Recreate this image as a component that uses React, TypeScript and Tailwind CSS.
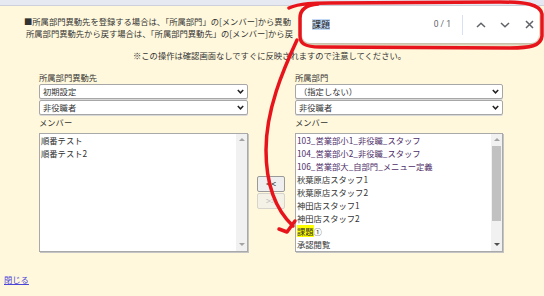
import React from "react";

function Chevron() {
  return (
    <svg width="7" height="5" viewBox="0 0 7 5" className="shrink-0">
      <path d="M0.8 1 L3.5 3.8 L6.2 1" fill="none" stroke="#222" strokeWidth="1.5" />
    </svg>
  );
}

function Select({ label }: { label: string }) {
  return (
    <div className="h-[15px] flex items-center justify-between bg-white border border-[#a7a7a7] rounded-[2px] pl-[3px] pr-[3px] shadow-[0_1px_0_#d8d8d8]">
      <span className="leading-[13px]">{label}</span>
      <Chevron />
    </div>
  );
}

function ScrollBar({ thumb }: { thumb: boolean }) {
  return (
    <div className="w-[11px] bg-[#f1f1f1] flex flex-col items-center">
      <div className="h-[12px] flex items-center justify-center">
        <div className="w-0 h-0 border-l-[3px] border-r-[3px] border-b-[3px] border-l-transparent border-r-transparent border-b-[#a3a3a3]" />
      </div>
      <div className="flex-1 w-full px-[1px]">
        {thumb ? <div className="h-[75px] bg-[#c1c1c1]" /> : null}
      </div>
      <div className="h-[12px] flex items-center justify-center">
        <div className={"w-0 h-0 border-l-[3px] border-r-[3px] border-t-[3px] border-l-transparent border-r-transparent " + (thumb ? "border-t-[#505050]" : "border-t-[#a3a3a3]")} />
      </div>
    </div>
  );
}

function ListBox({ children, thumb }: { children: React.ReactNode; thumb: boolean }) {
  return (
    <div className="h-[119px] flex bg-white border border-[#a9a9a9] shadow-[1px_1px_0_#c4c4c4]">
      <div className="flex-1 pl-[1px] leading-[13.05px] overflow-hidden">{children}</div>
      <ScrollBar thumb={thumb} />
    </div>
  );
}

export default function App() {
  const purple = "text-[#4e2d68]";
  return (
    <div className="relative w-[544px] h-[296px] overflow-hidden bg-[#fff8dc] font-['Noto_Sans_CJK_JP',sans-serif] text-[8.3px] text-[#333]">
      <div className="h-[6px] bg-[#e7e9f2] border-b border-[#cfd1da]" />
      <div className="pl-[24px] pt-[10px] leading-[11.6px] whitespace-nowrap">
        <div className="w-[276px] overflow-hidden">
          <p>■所属部門異動先を登録する場合は、「所属部門」の[メンバー]から異動</p>
          <p className="pl-[2px]">所属部門異動先から戻す場合は、「所属部門異動先」の[メンバー]から戻</p>
        </div>
        <p className="mt-[11px] pl-[109px]">※この操作は確認画面なしですぐに反映されますので注意してください。</p>
      </div>

      <div className="mt-[9px] ml-[39px] grid grid-cols-[209px_47px_208px] whitespace-nowrap">
        <div>
          <div className="leading-[12px]">所属部門異動先</div>
          <div className="mt-[1px]"><Select label="初期設定" /></div>
          <div className="mt-[1px]"><Select label="非役職者" /></div>
        </div>
        <div />
        <div>
          <div className="leading-[12px]">所属部門</div>
          <div className="mt-[1px]"><Select label="（指定しない）" /></div>
          <div className="mt-[1px]"><Select label="非役職者" /></div>
        </div>

        <div className="mt-[1px] leading-[12px]">メンバー</div>
        <div />
        <div className="mt-[1px] leading-[12px]">メンバー</div>

        <div className="mt-[5px]">
          <ListBox thumb={false}>
            <div>順番テスト</div>
            <div>順番テスト2</div>
          </ListBox>
        </div>
        <div className="mt-[5px] flex flex-col items-center justify-center gap-[1px] pr-[1px]">
          <div className="w-[28px] h-[16px] flex items-center justify-center bg-[#efefef] border border-[#9a9a9a] rounded-[2px] text-[9px] text-[#222] leading-none">&lt;&lt;</div>
          <div className="w-[28px] h-[16px] flex items-center justify-center bg-[#f4f1e6] border border-[#d6d4cc] rounded-[2px] text-[9px] text-[#bcbcbc] leading-none">&gt;&gt;</div>
        </div>
        <div className="mt-[5px]">
          <ListBox thumb={true}>
            <div className={purple}>103_営業部小1_非役職_スタッフ</div>
            <div className={purple}>104_営業部小2_非役職_スタッフ</div>
            <div className={purple}>106_営業部大_自部門_メニュー定義</div>
            <div>秋葉原店スタッフ1</div>
            <div>秋葉原店スタッフ2</div>
            <div>神田店スタッフ1</div>
            <div>神田店スタッフ2</div>
            <div><span className="bg-[#ffff00]">課題</span>①</div>
            <div>承認閲覧</div>
          </ListBox>
        </div>
      </div>

      <div className="mt-[21px] ml-[4px] leading-[12px]">
        <a className="text-[#4b45d8] underline">閉じる</a>
      </div>

      {/* Browser find bar */}
      <div className="absolute left-[302px] top-[6px] w-[237px] h-[37px] bg-white rounded-b-[8px] shadow-[0_2px_3px_rgba(0,0,0,0.25)] flex items-center">
        <span className="ml-[10px] bg-[#c3d8f5] text-[#202124] text-[9px] leading-[11px]">課題</span>
        <span className="ml-auto text-[#5f6368] text-[8.5px] font-['Roboto',sans-serif]">0 / 1</span>
        <div className="ml-[11px] w-px h-[20px] bg-[#d7e1f3]" />
        <svg width="10" height="6" viewBox="0 0 10 6" className="ml-[13px]">
          <path d="M1 5 L5 1.2 L9 5" fill="none" stroke="#5f6368" strokeWidth="1.5" />
        </svg>
        <svg width="10" height="6" viewBox="0 0 10 6" className="ml-[14px]">
          <path d="M1 1 L5 4.8 L9 1" fill="none" stroke="#5f6368" strokeWidth="1.5" />
        </svg>
        <svg width="9" height="9" viewBox="0 0 9 9" className="ml-[15px] mr-[5px]">
          <path d="M1 1 L8 8 M8 1 L1 8" fill="none" stroke="#5f6368" strokeWidth="1.5" />
        </svg>
      </div>

      {/* Red annotation */}
      <svg className="absolute left-0 top-0 pointer-events-none" width="544" height="296" viewBox="0 0 544 296">
        <path
          d="M289 8 C300 3 315 3 330 3 L500 2 C525 2 540 4 542 14 L542 36 C541 46 530 48 510 48 L320 47 C304 47 300 43 300 36 L300 18 C300 10 306 5 318 4"
          fill="none"
          stroke="#e8141c"
          strokeWidth="3.5"
          strokeLinecap="round"
          strokeLinejoin="round"
        />
        <path
          d="M297 40 C283 70 266 110 266 150 C266 185 276 210 293 226"
          fill="none"
          stroke="#e8141c"
          strokeWidth="3.5"
          strokeLinecap="round"
        />
        <path
          d="M279 229 L287 232 L295 221"
          fill="none"
          stroke="#e8141c"
          strokeWidth="3.5"
          strokeLinecap="round"
          strokeLinejoin="round"
        />
      </svg>
    </div>
  );
}
